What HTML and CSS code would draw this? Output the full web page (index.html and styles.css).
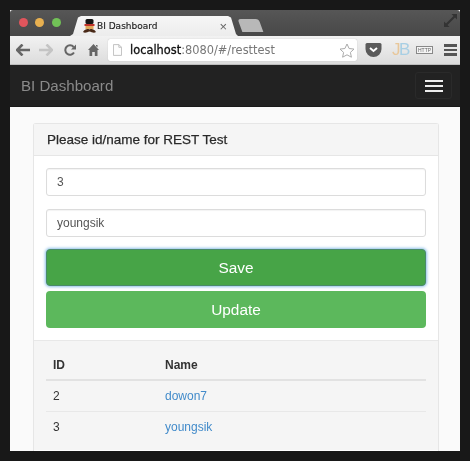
FILE: index.html
```html
<!DOCTYPE html>
<html lang="en">
  <head>
    <meta charset="UTF-8" />
    <title>BI Dashboard</title>
    <link rel="stylesheet" href="styles.css">
  </head>
  <body>
    <div class="window">
      <div class="tabbar">
        <div class="lights">
          <span class="light red"></span>
          <span class="light yellow"></span>
          <span class="light green"></span>
        </div>
        <div class="tab">
          <svg class="favicon" width="13" height="15" viewBox="0 0 13 15">
            <rect x="2.500" y="0" width="8" height="5" rx="1.500" fill="#161616"/>
            <rect x="1.500" y="5" width="10" height="2" fill="#c0332b"/>
            <rect x="2.500" y="7" width="8" height="3" fill="#e0a85a"/>
            <path d="M0 13c2-3 4.500-3.500 6.500-2.500 2-1 4.500-.5 6.500 2.500-2 1.500-4.500 0-6.500-.5-2 .5-4.500 2-6.500.5z" fill="#4a2a18"/>
          </svg>
          <span class="tab-title">BI Dashboard</span>
          <span class="tab-close">×</span>
        </div>
        <div class="newtab"></div>
        <svg class="fullscreen" width="13" height="13" viewBox="0 0 13 13">
          <path d="M7.500 0H13V5.500L11 3.500 3.500 11 5.500 13H0V7.500L2 9.500 9.500 2z" fill="#333"/>
        </svg>
      </div>
      <div class="toolbar">
        <svg class="tool back" width="14" height="12" viewBox="0 0 14 12"><path d="M6.500 0.500L1 6l5.500 5.500M1.500 6H14" fill="none" stroke="#666" stroke-width="2.600"/></svg>
        <svg class="tool forward" width="14" height="12" viewBox="0 0 14 12"><path d="M7.500 0.500L13 6l-5.500 5.500M12.500 6H0" fill="none" stroke="#c4c4c4" stroke-width="2.600"/></svg>
        <svg class="tool reload" width="12" height="12" viewBox="0 0 12 12"><path d="M10 8.500A4.700 4.700 0 1 1 9.600 3" fill="none" stroke="#666" stroke-width="2"/><path d="M12 0.500V5.500H7z" fill="#666"/></svg>
        <svg class="tool home" width="11" height="12" viewBox="0 0 11 12"><path d="M5.500 0L11 6H9.500V12H6.800V8H4.200V12H1.500V6H0zM8 1H9.500V3.500L8 2z" fill="#666"/></svg>
        <div class="omnibox">
          <svg class="page-icon" width="9" height="12" viewBox="0 0 10 13"><path d="M.5.500H6.500L9.500 3.500V12.500H.5zM6.500.500V3.500H9.500" fill="#fdfdfd" stroke="#bbb"/></svg>
          <span class="url"><b>localhost</b>:8080/#/resttest</span>
          <svg class="star" width="16" height="15" viewBox="0 0 16 15"><path d="M8 1l2.100 4.500 4.900.6-3.600 3.300 1 4.800L8 11.800l-4.400 2.400 1-4.800L1 6.100l4.900-.6z" fill="#fff" stroke="#aaa"/></svg>
        </div>
        <svg class="ext" width="17" height="14" viewBox="0 0 16 14"><path d="M0 1.500Q0 0 1.500 0H14.500Q16 0 16 1.500V6A8 8 0 0 1 0 6z" fill="#5a5a5a"/><path d="M4.500 5L8 8l3.500-3" fill="none" stroke="#fff" stroke-width="2"/></svg>
        <span class="jb"><span class="jb-j">J</span><span class="jb-b">B</span></span>
        <span class="http">HTTP</span>
        <div class="chrome-menu"><span></span><span></span><span></span></div>
      </div>
      <div class="navbar">
        <span class="brand">BI Dashboard</span>
        <div class="toggle"><span></span><span></span><span></span></div>
      </div>
      <div class="content">
        <div class="panel">
          <div class="panel-heading">Please id/name for REST Test</div>
          <div class="panel-body">
            <div class="field">3</div>
            <div class="field">youngsik</div>
            <div class="btn btn-save">Save</div>
            <div class="btn">Update</div>
          </div>
          <div class="panel-footer">
            <table>
              <tr><th class="col-id">ID</th><th>Name</th></tr>
              <tr><td>2</td><td><a href="#">dowon7</a></td></tr>
              <tr><td>3</td><td><a href="#">youngsik</a></td></tr>
            </table>
          </div>
        </div>
      </div>
    </div>
  </body>
</html>
```

FILE: styles.css
```css
html, body {
    margin: 0;
    height: 100%;
}
body {
    background: #181818;
    padding: 10px 10px 0;
    box-sizing: border-box;
    overflow: hidden;
    font-family: "Liberation Sans", Arial, sans-serif;
}
.window {
    width: 450px;
    height: 441px;
    overflow: hidden;
    display: flex;
    flex-direction: column;
    background: #fafafa;
    filter: blur(.35px);
}
.tabbar {
    height: 26px;
    flex: none;
    display: flex;
    align-items: flex-end;
    background: linear-gradient(#565656, #484848);
    border-radius: 3px 3px 0 0;
}
.lights {
    width: 60px;
    flex: none;
    align-self: flex-start;
    display: flex;
    gap: 7.500px;
    padding: 8px 0 0 8.500px;
    box-sizing: border-box;
}
.light {
    width: 9px;
    height: 9px;
    border-radius: 50%;
}
.red { background: #e0555c; }
.yellow { background: #e8b050; }
.green { background: #72c257; }
.tab {
    width: 168px;
    height: 20px;
    flex: none;
    display: flex;
    align-items: center;
    box-sizing: border-box;
    padding: 0 11px 0 13px;
    background: linear-gradient(#f6f6f6, #ececec);
    clip-path: polygon(0 100%, 3px 90%, 8px 8%, 11px 0, 158px 0, 161px 8%, 166px 90%, 168px 100%);
}
.favicon {
    flex: none;
    margin: 1px 1px 0 0;
}
.tab-title {
    flex: 1;
    font-size: 9px;
    color: #222;
    font-family: "DejaVu Sans", sans-serif;
    -webkit-text-stroke: .15px #222;
}
.tab-close {
    font-size: 13px;
    color: #666;
}
.newtab {
    width: 21px;
    height: 13px;
    margin: 0 0 4px 2px;
    background: #b8b8b8;
    transform: skewX(20deg);
    border-radius: 3px 3px 0 0;
}
.fullscreen {
    align-self: flex-start;
    margin: 4px 3px 0 auto;
}
.toolbar {
    height: 29px;
    flex: none;
    display: flex;
    align-items: center;
    box-sizing: border-box;
    padding: 0 3px 0 6px;
    background: linear-gradient(#f2f2f2, #dcdcdc);
    border-bottom: 1px solid #bdbdbd;
}
.tool { flex: none; }
.back { margin-right: 9px; }
.forward { margin-right: 11px; }
.reload { margin-right: 12px; }
.home { margin-right: 9px; }
.omnibox {
    width: 249px;
    height: 22px;
    flex: none;
    display: flex;
    align-items: center;
    box-sizing: border-box;
    padding: 0 2px 0 5px;
    background: #fff;
    border-radius: 2px;
    box-shadow: 0 0 1px #aaa;
}
.page-icon {
    margin-right: 8px;
    flex: none;
}
.url {
    flex: 1;
    font-family: "DejaVu Sans", sans-serif;
    font-size: 11.400px;
    color: #777;
    white-space: nowrap;
}
.url b {
    font-weight: normal;
    color: #111;
    -webkit-text-stroke: .3px #111;
}
.ext {
    flex: none;
    margin-left: 8px;
}
.jb {
    font-size: 17px;
    margin-left: 10px;
    width: 14px;
    letter-spacing: -1.500px;
}
.jb-j { color: #e8c79a; }
.jb-b { color: #a8cfe4; }
.http {
    width: 15px;
    height: 6px;
    margin-left: 10px;
    border: 1px solid #888;
    background: #f4f4f4;
    font-size: 5px;
    line-height: 6px;
    text-align: center;
    color: #666;
}
.chrome-menu {
    margin-left: 11px;
    display: flex;
    flex-direction: column;
    gap: 2px;
}
.chrome-menu span {
    display: block;
    width: 13px;
    height: 2.500px;
    background: #555;
}
.navbar {
    height: 42px;
    flex: none;
    display: flex;
    align-items: center;
    justify-content: space-between;
    padding: 0 8px 0 11px;
    box-sizing: border-box;
    background: #222;
    border-bottom: 1px solid #1a1a1a;
}
.brand {
    font-size: 15.100px;
    color: #8a8a8a;
}
.toggle {
    width: 37px;
    height: 27px;
    box-sizing: border-box;
    border: 1px solid #2a2a2a;
    border-radius: 3px;
    display: flex;
    flex-direction: column;
    justify-content: center;
    align-items: center;
    gap: 3px;
}
.toggle span {
    display: block;
    width: 18px;
    height: 2px;
    background: #ededed;
}
.content {
    flex: 1;
    padding: 16px 21px 0 23px;
    overflow: hidden;
}
.panel {
    border: 1px solid #e6e6e6;
    border-bottom: none;
    border-radius: 3px 3px 0 0;
    background: #fff;
    height: 400px;
}
.panel-heading {
    height: 32px;
    box-sizing: border-box;
    padding: 0 13px;
    line-height: 32px;
    background: #f5f5f5;
    border-bottom: 1px solid #e6e6e6;
    font-size: 13.500px;
    color: #2a2a2a;
    -webkit-text-stroke: .25px #2a2a2a;
}
.panel-body {
    padding: 12px 12px 12px;
    height: 184px;
    box-sizing: border-box;
    display: flex;
    flex-direction: column;
}
.field {
    height: 28px;
    box-sizing: border-box;
    padding: 0 10px;
    line-height: 26px;
    margin-bottom: 13px;
    border: 1px solid #dcdcdc;
    border-radius: 3px;
    font-size: 12px;
    color: #555;
    box-shadow: inset 0 1px 1px rgba(0,0,0,.05);
}
.btn {
    height: 37px;
    flex: none;
    background: #5cb85c;
    border-radius: 4px;
    color: #fff;
    font-size: 15.400px;
    line-height: 37px;
    text-align: center;
}
.field + .btn {
    margin-top: -1px;
}
.btn-save {
    height: 37px;
    margin-bottom: 5px;
    background: #47a447;
    border: 1px solid #4a8a6a;
    box-sizing: border-box;
    line-height: 35px;
    box-shadow: 0 0 3px 1px #8fc0e8;
}
.panel-footer {
    height: 110px;
    box-sizing: border-box;
    padding: 10px 12px 0;
    background: #f5f5f5;
    border-top: 1px solid #e8e8e8;
}
table {
    width: 100%;
    border-collapse: collapse;
    font-size: 12px;
    color: #333;
}
th {
    text-align: left;
    height: 28px;
    padding: 0 7px;
    border-bottom: 2px solid #e2e2e2;
}
.col-id {
    width: 98px;
}
td {
    height: 30px;
    padding: 0 7px;
    border-bottom: 1px solid #e8e8e8;
}
tr:last-child td {
    border-bottom: none;
}
a {
    color: #428bca;
    text-decoration: none;
}
```
